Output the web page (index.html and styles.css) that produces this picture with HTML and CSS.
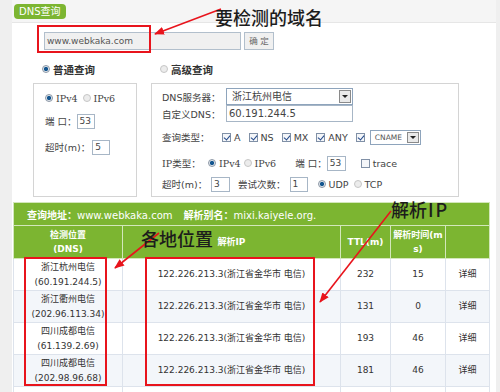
FILE: index.html
```html
<!DOCTYPE html>
<html>
<head>
<meta charset="utf-8">
<title>DNS查询</title>
<link rel="stylesheet" href="styles.css">
</head>
<body>
<div class="page">
  <div class="hd"><span class="tab">DNS查询</span></div>

  <div class="domain">
    <span class="dom-in">www.webkaka.com</span><span class="ok">确 定</span>
  </div>

  <div class="modes">
    <span class="opt mode"><span class="rd on"></span>普通查询</span>
    <span class="opt mode"><span class="rd"></span>高级查询</span>
  </div>

  <div class="boxes">
    <div class="box basic">
      <div class="row">
        <span class="opt"><span class="rd on"></span><span class="ser">IPv4</span></span>
        <span class="opt sp5"><span class="rd"></span><span class="ser">IPv6</span></span>
      </div>
      <div class="row b-r2"><span class="lbl">端 口：</span><span class="fld w18">53</span></div>
      <div class="row b-r3"><span class="lbl">超时(m)：</span><span class="fld w18 ml2">5</span></div>
    </div>

    <div class="box adv">
      <div class="row tall"><span class="lbl l64">DNS服务器：</span><span class="sel w127">浙江杭州电信<i class="dd"></i></span></div>
      <div class="row tall"><span class="lbl l64">自定义DNS：</span><span class="fld w127 big">60.191.244.5</span></div>
      <div class="row a-r3">
        <span class="lbl l60">查询类型：</span>
        <span class="chk"><span class="cb on"></span>A</span>
        <span class="chk"><span class="cb on"></span>NS</span>
        <span class="chk"><span class="cb on"></span>MX</span>
        <span class="chk"><span class="cb on"></span>ANY</span>
        <span class="chk"><span class="cb on"></span></span>
        <span class="sel cname">CNAME<i class="dd"></i></span>
      </div>
      <div class="row a-r4">
        <span class="lbl l46"><span class="ser">IP</span>类型：</span>
        <span class="opt"><span class="rd on"></span><span class="ser">IPv4</span></span>
        <span class="opt sp3"><span class="rd"></span><span class="ser">IPv6</span></span>
        <span class="lbl sp19">端 口：</span><span class="fld w19">53</span>
        <span class="chk sp15"><span class="cb"></span>trace</span>
      </div>
      <div class="row a-r5">
        <span class="lbl l49">超时(m)：</span><span class="fld w19">3</span>
        <span class="lbl sp8">尝试次数：</span><span class="fld w18 ml4">1</span>
        <span class="opt sp10"><span class="rd on"></span>UDP</span>
        <span class="opt sp5"><span class="rd"></span>TCP</span>
      </div>
    </div>
  </div>

  <table class="res">
    <colgroup>
      <col class="c1"><col class="c2"><col class="c3"><col class="c4"><col class="c5">
    </colgroup>
    <tr class="h1">
      <th colspan="5"><b>查询地址：</b>www.webkaka.com<span class="gap"></span><b>解析别名：</b>mixi.kaiyele.org.</th>
    </tr>
    <tr class="h2">
      <th>检测位置<br>(DNS)</th>
      <th>解析IP</th>
      <th>TTL(m)</th>
      <th>解析时间(m<br>s)</th>
      <th></th>
    </tr>
    <tr>
      <td>浙江杭州电信<br>(60.191.244.5)</td>
      <td>122.226.213.3(浙江省金华市 电信)</td>
      <td>232</td><td>15</td><td>详细</td>
    </tr>
    <tr class="alt">
      <td>浙江衢州电信<br>(202.96.113.34)</td>
      <td>122.226.213.3(浙江省金华市 电信)</td>
      <td>131</td><td>0</td><td>详细</td>
    </tr>
    <tr>
      <td>四川成都电信<br>(61.139.2.69)</td>
      <td>122.226.213.3(浙江省金华市 电信)</td>
      <td>193</td><td>46</td><td>详细</td>
    </tr>
    <tr class="alt">
      <td>四川成都电信<br>(202.98.96.68)</td>
      <td>122.226.213.3(浙江省金华市 电信)</td>
      <td>181</td><td>46</td><td>详细</td>
    </tr>
    <tr>
      <td></td><td></td><td></td><td></td><td></td>
    </tr>
  </table>
</div>

<svg class="marks" width="500" height="392" viewBox="0 0 500 392">
  <defs>
    <marker id="ah" markerWidth="10" markerHeight="8" refX="9" refY="4" orient="auto" markerUnits="userSpaceOnUse">
      <path d="M0,0 L10,4 L0,8 z" fill="#e8141c"/>
    </marker>
  </defs>
  <rect x="38" y="26" width="112" height="26" fill="none" stroke="#e8141c" stroke-width="2"/>
  <rect x="25" y="258" width="81" height="127" fill="none" stroke="#e8141c" stroke-width="2"/>
  <rect x="146" y="258" width="168" height="127" fill="none" stroke="#e8141c" stroke-width="2"/>
  <line x1="221" y1="9" x2="155" y2="34" stroke="#e8141c" stroke-width="1.5" marker-end="url(#ah)"/>
  <line x1="159" y1="233" x2="115" y2="268" stroke="#e8141c" stroke-width="1.6" marker-end="url(#ah)"/>
  <line x1="391" y1="211" x2="320" y2="302" stroke="#e8141c" stroke-width="1.6" marker-end="url(#ah)"/>
</svg>
<div class="note n1">要检测的域名</div>
<div class="note n2">各地位置</div>
<div class="note n3">解析<span class="ip">IP</span></div>
</body>
</html>
```

FILE: styles.css
```css
* { box-sizing: border-box; }
html, body { margin: 0; height: 100%; }
body {
  background: #efefef;
  overflow: hidden;
  position: relative;
  font-family: "DejaVu Sans", "Noto Sans CJK SC", sans-serif;
  font-size: 9.5px;
  color: #444;
}
.page { margin-left: 12px; width: 484px; height: 392px; background: #fff; overflow: hidden; }

.hd { height: 23px; background: #f5f5f5; border-bottom: 1px solid #e6e6e6; padding: 4px 0 0 2px; }
.tab {
  display: inline-block; height: 15px; line-height: 15px; padding: 0 5px;
  background: #7cb531; color: #fff; border-radius: 4px; font-size: 10px;
}

.domain { display: flex; margin-top: 9px; padding-left: 32px; height: 18px; }
.dom-in {
  width: 197px; height: 18px; border: 1px solid #b2bfcc; background: #f0f0f0;
  color: #555; font-size: 9px; line-height: 16px; padding-left: 2px;
}
.ok {
  margin-left: 3px; width: 30px; height: 18px; border: 1px solid #b2bfcc; background: #f0f0f0;
  color: #666; font-size: 8.5px; line-height: 16px; text-align: center;
}

.modes { display: flex; margin-top: 12px; padding-left: 30px; height: 14px; align-items: center; }
.mode { width: 118px; font-weight: bold; font-size: 10.5px; color: #333; }

.opt { display: inline-flex; align-items: center; gap: 3px; }
.rd { width: 8px; height: 8px; border-radius: 50%; border: 1px solid #c6c6c6; background: #ececec; flex: none; }
.rd.on { border-color: #8d98a6; background: radial-gradient(circle, #14568f 0 1.8px, #dfe5ec 2.4px); }
.ser { font-family: "DejaVu Serif", "Noto Sans CJK SC", serif; font-size: 9.5px; }

.chk { display: inline-flex; align-items: center; gap: 3px; margin-right: 8px; }
.cb { width: 9px; height: 9px; border: 1px solid #8090a6; background: #f4f6f9; position: relative; flex: none; }
.cb.on::after {
  content: ""; position: absolute; left: 2px; top: 0; width: 3px; height: 5px;
  border: solid #23498a; border-width: 0 1.5px 1.5px 0; transform: rotate(40deg);
}

.boxes { display: flex; gap: 14px; margin-top: 7px; padding-left: 21px; }
.box { border: 1px solid #d4d4d4; height: 114px; }
.basic { width: 104px; padding: 7px 0 0 11px; }
.adv { width: 308px; padding: 4px 0 0 10px; }

.row { display: flex; align-items: center; height: 14px; white-space: nowrap; }
.row.tall { height: 17px; }
.b-r2 { margin-top: 9px; }
.b-r3 { margin-top: 12px; }
.a-r3 { margin-top: 8px; }
.a-r4 { margin-top: 12px; }
.a-r5 { margin-top: 7px; }

.lbl { flex: none; }
.l64 { width: 64px; }
.l60 { width: 60px; }
.l46 { width: 46px; }
.l49 { width: 49px; }
.sp3 { margin-left: 3px; }
.sp5 { margin-left: 5px; }
.sp8 { margin-left: 8px; }
.sp10 { margin-left: 10px; }
.sp15 { margin-left: 15px; }
.sp19 { margin-left: 19px; }
.ml2 { margin-left: 2px; }
.ml4 { margin-left: 4px; }

.fld {
  display: inline-block; height: 15px; border: 1px solid #a7b6c6; background: #fff;
  font-size: 9px; line-height: 13px; padding-left: 2px; color: #444; flex: none;
}
.w18 { width: 18px; }
.w19 { width: 19px; }
.w127 { width: 127px; }
.fld.big, .sel { height: 17px; line-height: 15px; font-size: 10px; }

.sel {
  display: inline-block; position: relative; border: 1px solid #8ea4bc; background: #fff;
  padding-left: 5px; color: #444; flex: none;
}
.sel .dd {
  position: absolute; right: 1px; top: 1px; width: 12px; height: 13px;
  border: 1px solid #8a8a8a; background: #e9e9e9;
}
.sel .dd::after {
  content: ""; position: absolute; left: 2px; top: 4px;
  border-left: 3px solid transparent; border-right: 3px solid transparent; border-top: 3px solid #222;
}
.cname { width: 51px; height: 15px; line-height: 14px; font-size: 7.5px; padding-left: 4px; margin-left: -3px; color: #555; }
.cname .dd { height: 11px; }
.cname .dd::after { top: 3px; }

.res {
  margin: 5px 0 0 1px; width: 476px; border-collapse: collapse; table-layout: fixed;
  font-size: 9px; color: #333;
}
.res .c1 { width: 109px; }
.res .c2 { width: 218px; }
.res .c3 { width: 50px; }
.res .c4 { width: 55px; }
.res .c5 { width: 44px; }
.res th { background: #7cb531; color: #fff; border: 1px solid #d3e7bb; padding: 0; }
.res .h1 th { height: 23px; text-align: left; padding-left: 13px; font-size: 10px; font-weight: normal; }
.res .h1 b { font-weight: bold; }
.res .h1 .gap { display: inline-block; width: 11px; }
.res .h2 th { height: 33px; font-size: 9px; line-height: 14px; font-weight: bold; }
.res td { height: 32px; border: 1px solid #dde3ec; text-align: center; line-height: 15px; padding: 0; }
.res tr.alt td { background: #f3f6fa; }

.marks { position: absolute; left: 0; top: 0; }
.note {
  position: absolute; font-family: "Noto Sans CJK SC", sans-serif; font-weight: 500;
  color: #1c1c1c; font-size: 18px; line-height: 20px; white-space: nowrap;
}
.n1 { left: 215px; top: 7px; }
.n2 { left: 141px; top: 228px; }
.n3 { left: 391px; top: 199px; }
.n3 .ip { letter-spacing: 2px; margin-left: 1px; }
```
